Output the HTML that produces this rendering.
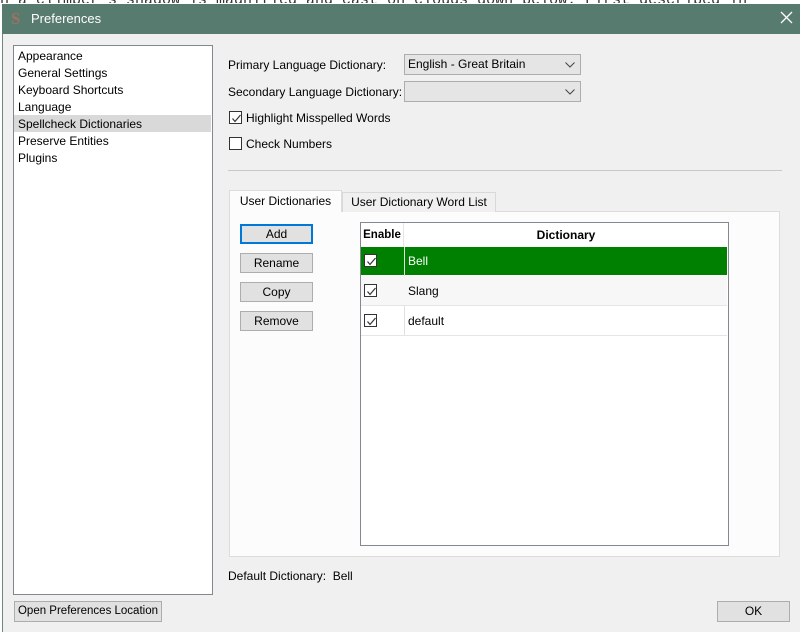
<!DOCTYPE html>
<html><head><style>
*{box-sizing:border-box;margin:0;padding:0}
body{width:800px;height:632px;overflow:hidden;background:#fff;font-family:"Liberation Sans",sans-serif;font-size:12px;color:#000;position:relative}
.a{position:absolute;white-space:nowrap}
.btn{position:absolute;background:#e1e1e1;border:1px solid #adadad;text-align:center;line-height:18px;white-space:nowrap}
.cb{position:absolute;width:13px;height:13px;border:1px solid #333;background:#fff}
.cb svg{position:absolute;left:1px;top:1px}
.dd{position:absolute;background:#e5e5e5;border:1px solid #adadad;padding-left:3px;line-height:19px}
.dd svg{position:absolute;right:5px;top:7px}
</style></head><body>
<div class="a" style="left:0;top:-4px;width:800px;height:7px;background:#fff;overflow:hidden;font-family:'Liberation Mono',monospace;font-size:15px;line-height:10px;color:#333;white-space:nowrap">n a climber's shadow is magnified and cast on clouds down below. First described in</div>
<div class="a" style="left:2px;top:4px;width:798px;height:628px;background:#f0f0f0;border-left:1px solid #6a8a80"></div>
<div class="a" style="left:2px;top:4px;width:798px;height:30px;background:#587b70"></div>
<div class="a" style="left:11px;top:9px;font-family:'Liberation Serif',serif;font-weight:bold;font-size:17px;color:#a07060">S</div>
<div class="a" style="left:31px;top:11px;color:#fff;font-size:13px">Preferences</div>
<svg class="a" style="left:780px;top:11px" width="13" height="13"><path d="M1 1L12 12M12 1L1 12" stroke="#fff" stroke-width="1.3"/></svg>

<div class="a" style="left:13px;top:45px;width:200px;height:550px;background:#fff;border:1px solid #828790"></div>
<div class="a" style="left:14px;top:115px;width:197px;height:17px;background:#d9d9d9"></div>
<div class="a" style="left:18px;top:48px;line-height:17px">Appearance<br>General Settings<br>Keyboard Shortcuts<br>Language<br>Spellcheck Dictionaries<br>Preserve Entities<br>Plugins</div>

<div class="a" style="left:228px;top:58px">Primary Language Dictionary:</div>
<div class="dd" style="left:404px;top:54px;width:177px;height:21px">English - Great Britain<svg width="10" height="6"><path d="M0.5 0.5L5 5L9.5 0.5" stroke="#444" fill="none"/></svg></div>
<div class="a" style="left:228px;top:85px">Secondary Language Dictionary:</div>
<div class="dd" style="left:404px;top:81px;width:177px;height:21px"><svg width="10" height="6"><path d="M0.5 0.5L5 5L9.5 0.5" stroke="#444" fill="none"/></svg></div>
<div class="cb" style="left:229px;top:111px"><svg width="11" height="11"><path d="M1.5 5.5L4 8.5L9.5 2" stroke="#333" fill="none" stroke-width="1.2"/></svg></div>
<div class="a" style="left:246px;top:111px">Highlight Misspelled Words</div>
<div class="cb" style="left:229px;top:137px"></div>
<div class="a" style="left:246px;top:137px">Check Numbers</div>
<div class="a" style="left:228px;top:170px;width:554px;height:1px;background:#c8c8c8"></div>

<div class="a" style="left:229px;top:211px;width:551px;height:346px;background:#fcfcfc;border:1px solid #dcdcdc"></div>
<div class="a" style="left:342px;top:192px;width:154px;height:20px;background:#f0f0f0;border:1px solid #d9d9d9;border-bottom:none;text-align:center;line-height:19px">User Dictionary Word List</div>
<div class="a" style="left:229px;top:190px;width:113px;height:22px;background:#fcfcfc;border:1px solid #dcdcdc;border-bottom:none;text-align:center;line-height:20px">User Dictionaries</div>

<div class="btn" style="left:240px;top:224px;width:73px;height:20px;border:2px solid #0078d7;line-height:16px">Add</div>
<div class="btn" style="left:240px;top:253px;width:73px;height:20px">Rename</div>
<div class="btn" style="left:240px;top:282px;width:73px;height:20px">Copy</div>
<div class="btn" style="left:240px;top:311px;width:73px;height:20px">Remove</div>

<div class="a" style="left:360px;top:222px;width:369px;height:324px;background:#fff;border:1px solid #828790"></div>
<div class="a" style="left:361px;top:223px;width:43px;height:24px;line-height:24px;font-weight:bold;text-align:center;border-right:1px solid #e5e5e5;font-size:11.5px">Enable</div>
<div class="a" style="left:404px;top:223px;width:324px;height:24px;line-height:24px;font-weight:bold;text-align:center">Dictionary</div>
<div class="a" style="left:361px;top:247px;width:366px;height:28px;background:#008000"></div>
<div class="a" style="left:404px;top:247px;width:1px;height:88px;background:#e0e0e0"></div>
<div class="a" style="left:361px;top:305px;width:366px;height:1px;background:#e5e5e5"></div>
<div class="a" style="left:361px;top:335px;width:366px;height:1px;background:#e5e5e5"></div>
<div class="a" style="left:361px;top:276px;width:366px;height:29px;background:#f7f7f7"></div>
<div class="cb" style="left:364px;top:254px"><svg width="11" height="11"><path d="M1.5 5.5L4 8.5L9.5 2" stroke="#333" fill="none" stroke-width="1.2"/></svg></div>
<div class="cb" style="left:364px;top:284px"><svg width="11" height="11"><path d="M1.5 5.5L4 8.5L9.5 2" stroke="#333" fill="none" stroke-width="1.2"/></svg></div>
<div class="cb" style="left:364px;top:314px"><svg width="11" height="11"><path d="M1.5 5.5L4 8.5L9.5 2" stroke="#333" fill="none" stroke-width="1.2"/></svg></div>
<div class="a" style="left:408px;top:254px;color:#fff">Bell</div>
<div class="a" style="left:408px;top:284px">Slang</div>
<div class="a" style="left:408px;top:314px">default</div>

<div class="a" style="left:228px;top:569px">Default Dictionary:&nbsp; Bell</div>
<div class="btn" style="left:14px;top:601px;width:148px;height:21px;font-size:11.5px">Open Preferences Location</div>
<div class="btn" style="left:717px;top:601px;width:73px;height:21px">OK</div>
</body></html>
